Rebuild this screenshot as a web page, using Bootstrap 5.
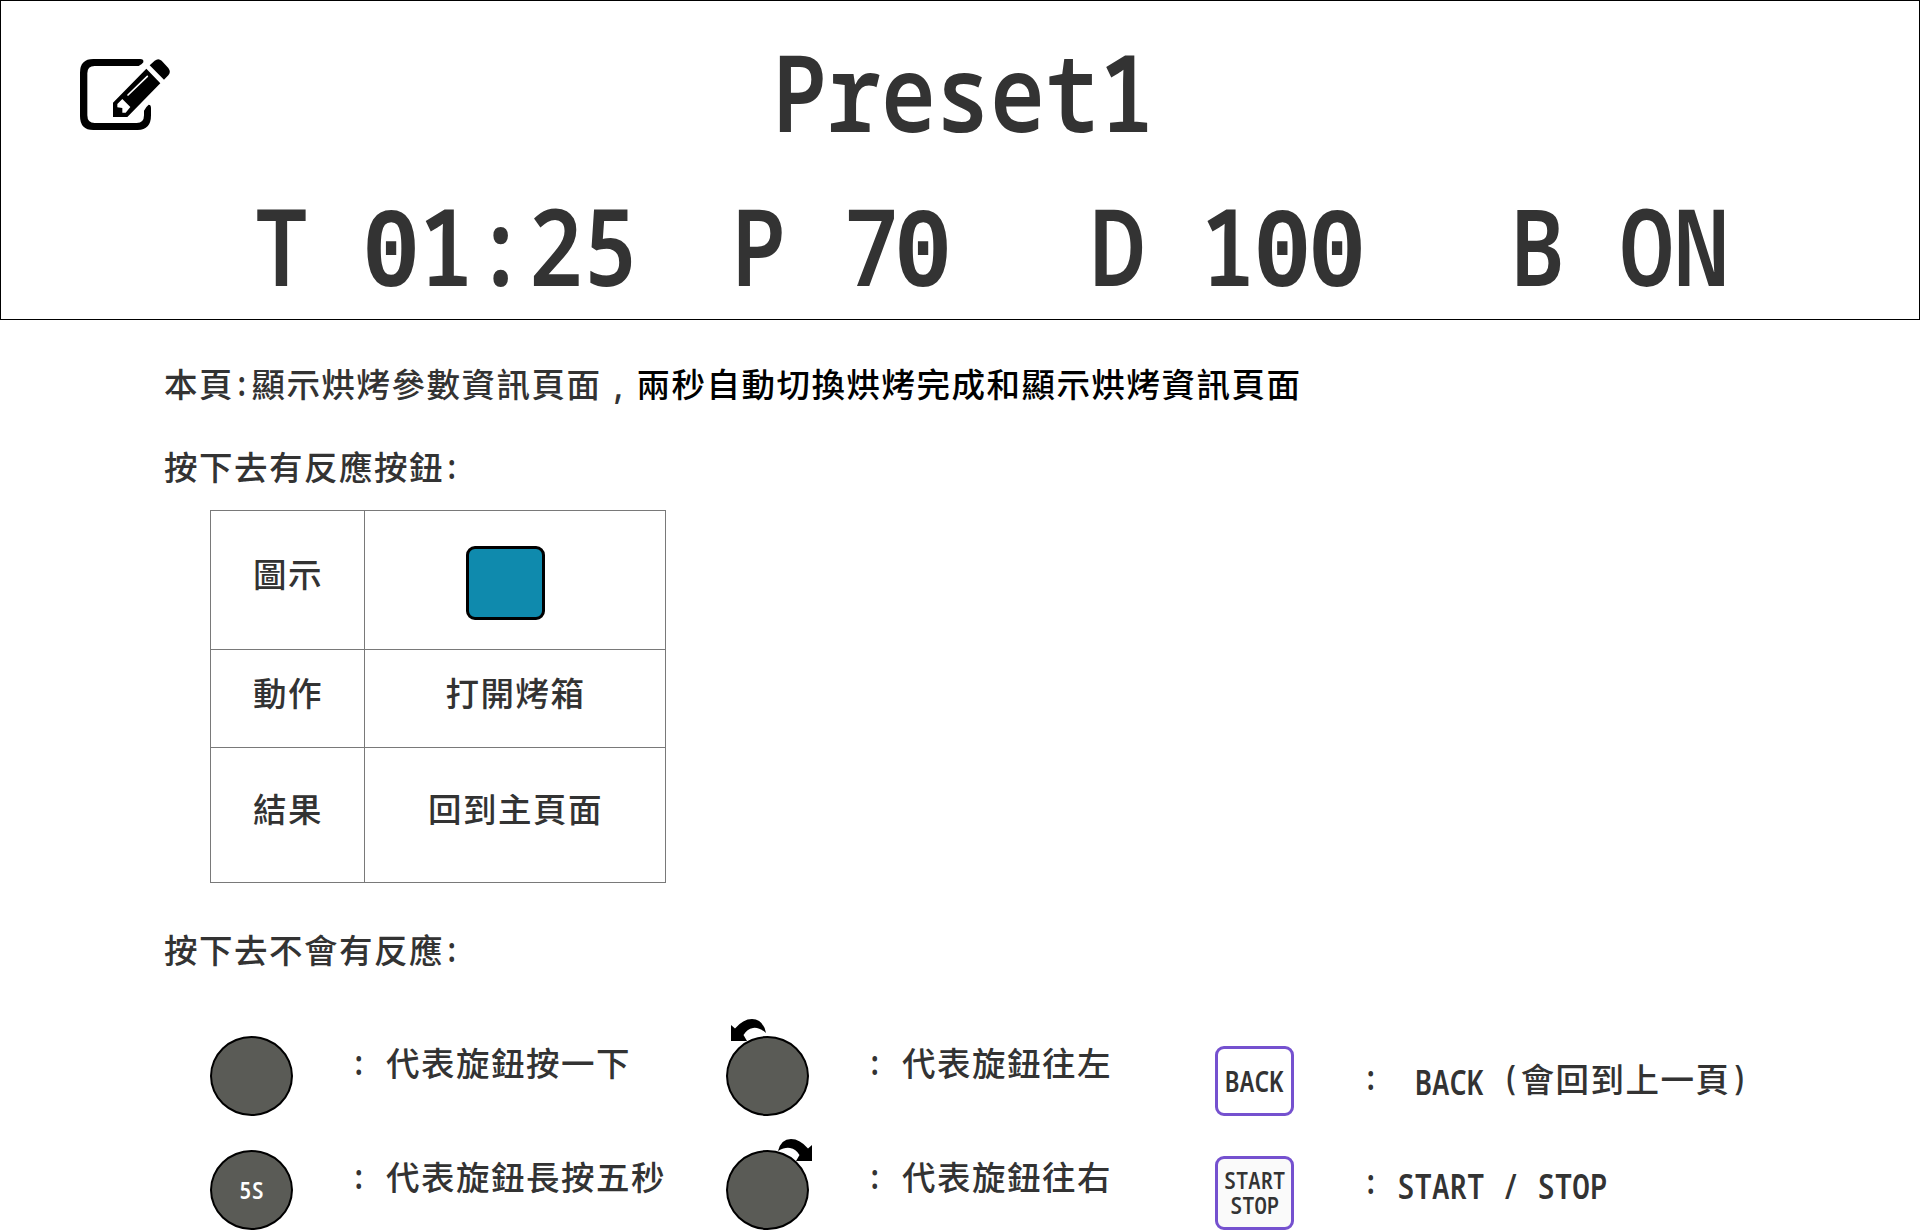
<!DOCTYPE html>
<html lang="zh-Hant">
<head>
<meta charset="utf-8">
<title>Preset1</title>
<link rel="stylesheet" href="https://cdn.jsdelivr.net/npm/bootstrap@5.3.0/dist/css/bootstrap.min.css">
<style>
body{background:#fff;color:#333;font-family:"Noto Sans CJK TC",sans-serif;font-weight:500;font-size:33.5px;letter-spacing:1.5px;line-height:40px;overflow:hidden}
.screen{width:1920px;height:1230px}
.panel{height:320px;border:1px solid #000}
.lat{display:inline-block;font-family:"Noto Sans Mono","Liberation Mono",monospace;font-weight:600;font-size:29.2px;letter-spacing:0;white-space:pre;transform:scaleY(1.15)}
.big{font-size:91.5px;line-height:100px;font-weight:600;transform:scaleY(1.165)}
.preset-name{margin:40px 0 0 602px;letter-spacing:-.4px;font-weight:650}
.zero{font-family:"Liberation Mono",monospace;font-size:1.07em;font-weight:700;letter-spacing:-.042em;margin-left:-.021em;margin-right:.021em;line-height:1}
.seven{margin-left:3px;margin-right:-3px}
.edit-icon{width:90px;height:71px;margin:58px 0 0 79px}
.readout{margin:55px 0 0 253px}
.readout .big{font-weight:650}
.r-p{margin-left:93px}
.r-d{margin-left:140px}
.r-b{margin-left:145px}
.notes{padding-left:164px}
.line{height:40px;display:flex;white-space:nowrap}
.colon{margin-left:-1px;margin-right:1px}
.comma{width:35px;text-align:center;padding-top:3px;margin-left:-1px;margin-right:1px}
.spec{margin-left:46px;width:456px;border-collapse:collapse;text-align:center;table-layout:fixed}
.spec td{border:1px solid #797979;padding:0;vertical-align:middle}
.spec td div{padding-left:1px}
.spec .swatch{width:79px;height:74px;border:3px solid #000;border-radius:9px;background:#0f8aad;margin:6px auto 0 101px}
.legend{display:grid;grid-template-columns:516px 489px 1fr;row-gap:34px;margin-left:46px;margin-top:67px}
.item{height:80px;display:flex;align-items:flex-start;white-space:nowrap}
.knob{position:relative;width:83px;height:80px;border:2px solid #000;border-radius:50%;background:#5a5b56;color:#fff;display:flex;align-items:center;justify-content:center;flex:none}
.knob .lat,.keycap .lat{font-size:20.5px;line-height:22px;font-weight:600}
.arrow-l,.arrow-r{position:absolute;width:36px;height:23px;overflow:visible}
.arrow-l{left:3px;top:-19px}
.arrow-r{left:50px;top:-13px}
.item .txt{display:flex;margin:6px 0 0 57px}
.txt .lat + span:not(.lat){padding-left:1px}
.item .txt-back{margin:22px 0 0 68px}
.item .txt-start{margin:12px 0 0 68px}
.keycap{width:79px;border:3px solid #7551cf;border-radius:9px;display:flex;flex-direction:column;align-items:center;justify-content:center;flex:none}
.keycap.back{height:70px;margin-top:10px;padding-bottom:2px}
.keycap.back .lat{font-size:25px;line-height:30px}
.keycap.start{height:74px;margin-top:6px;background:#fafafa;gap:6px}
.keycap.start .lat{line-height:19px}
</style>
</head>
<body>
<div class="screen d-flex flex-column">
  <header class="panel">
    <div class="d-flex align-items-start">
      <svg class="edit-icon" viewBox="60 57 270 213" preserveAspectRatio="none">
        <path d="M100 57H240Q252 57 250 67Q246 74 236 78H104Q82 78 82 100V226Q82 249 104 249H230Q252 249 252 226V212Q258 200 266 194Q273 194 273 204V226Q273 270 233 270H100Q60 270 60 228V98Q60 57 100 57Z"/>
        <path d="M259 86L301 130L202 231H159V188ZM269 76L284 62Q295 53 305 62L325 84Q334 96 325 106L312 119Z"/>
        <path d="M262 109L204 165" stroke="#fff" stroke-width="5" stroke-linecap="round"/>
        <path d="M187 177L211 201L197 218H187V204L172 202V192Z" fill="#fff"/>
      </svg>
      <div class="lat big preset-name">Preset1</div>
    </div>
    <div class="d-flex readout">
      <div class="lat big">T <span class="zero">0</span>1:25</div>
      <div class="lat big r-p">P <span class="seven">7</span><span class="zero">0</span></div>
      <div class="lat big r-d">D 1<span class="zero">0</span><span class="zero">0</span></div>
      <div class="lat big r-b">B ON</div>
    </div>
  </header>
  <main class="notes">
    <div class="line" style="margin-top:43px"><span>本頁</span><span class="lat colon">:</span><span>顯示烘烤參數資訊頁面</span><span class="lat comma">,</span><span class="text-black">兩秒自動切換烘烤完成和顯示烘烤資訊頁面</span></div>
    <div class="line" style="margin-top:43px"><span>按下去有反應按鈕</span><span class="lat colon">:</span></div>
    <table class="spec" style="margin-top:24px">
      <colgroup><col style="width:154px"><col style="width:301px"></colgroup>
      <tr style="height:139px"><td><div style="margin-top:-14px">圖示</div></td><td><div class="swatch"></div></td></tr>
      <tr style="height:98px"><td><div style="margin-top:-13px">動作</div></td><td><div style="margin-top:-13px">打開烤箱</div></td></tr>
      <tr style="height:135px"><td><div style="margin-top:-14px">結果</div></td><td><div style="margin-top:-14px">回到主頁面</div></td></tr>
    </table>
    <div class="line" style="margin-top:46px"><span>按下去不會有反應</span><span class="lat colon">:</span></div>
    <div class="legend">
      <div class="item"><div class="knob"></div><div class="txt"><span class="lat">: </span><span>代表旋鈕按一下</span></div></div>
      <div class="item"><div class="knob"><svg class="arrow-l" viewBox="0 0 36 23"><path d="M0 6L4 9.500Q12 0 21 0Q32 0 35 14Q28 8 22 9Q16 10 12.500 16L16 22H0Z"/></svg></div><div class="txt"><span class="lat">: </span><span>代表旋鈕往左</span></div></div>
      <div class="item"><div class="keycap back"><span class="lat">BACK</span></div><div class="txt txt-back"><span class="lat">:  </span><span class="lat mt-1">BACK </span><span class="lat">(</span><span>會回到上一頁</span><span class="lat">)</span></div></div>
      <div class="item"><div class="knob"><span class="lat">5S</span></div><div class="txt"><span class="lat">: </span><span>代表旋鈕長按五秒</span></div></div>
      <div class="item"><div class="knob"><svg class="arrow-r" viewBox="0 0 36 23"><path d="M34 6L30 9.500Q22 0 13 0Q3 0 0 12Q7 8 12 9Q18 10 21.500 16L18 22H34Z"/></svg></div><div class="txt"><span class="lat">: </span><span>代表旋鈕往右</span></div></div>
      <div class="item"><div class="keycap start"><span class="lat">START</span><span class="lat">STOP</span></div><div class="txt txt-start"><span class="lat">: </span><span class="lat mt-1">START / STOP</span></div></div>
    </div>
  </main>
</div>
<script src="https://cdn.jsdelivr.net/npm/bootstrap@5.3.0/dist/js/bootstrap.bundle.min.js"></script>
</body>
</html>
